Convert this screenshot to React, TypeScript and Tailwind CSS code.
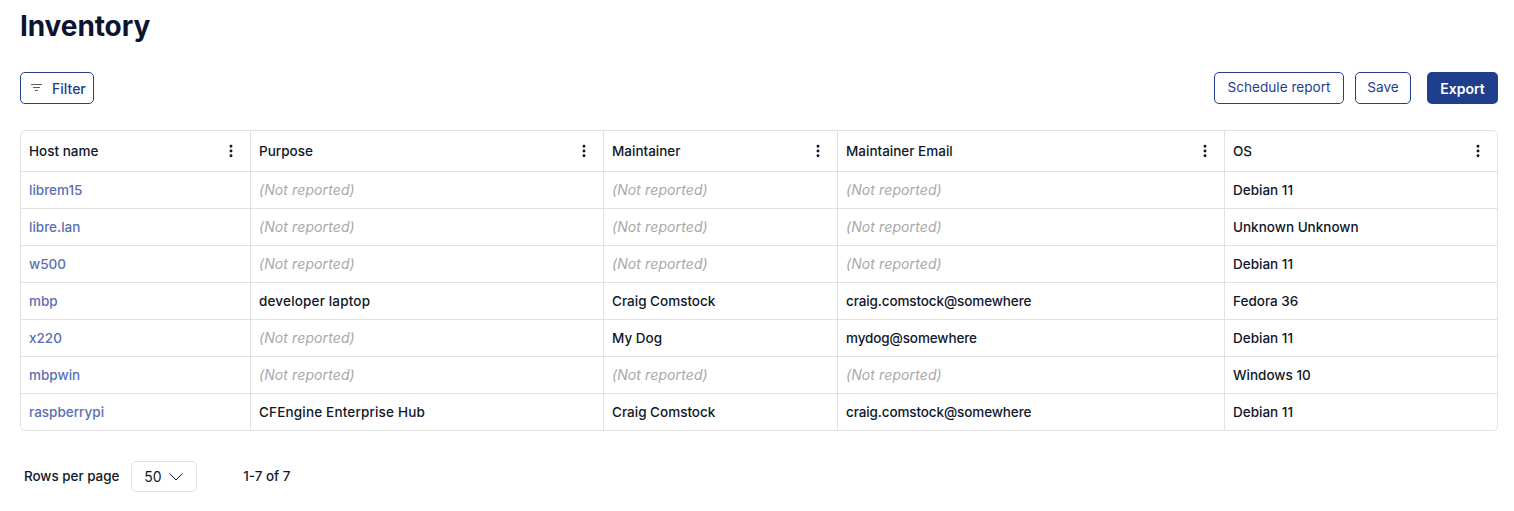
import { ChevronDown, EllipsisVertical } from "lucide-react";

const columns = [
  { label: "Host name", width: "w-[229px]" },
  { label: "Purpose", width: "w-[353px]" },
  { label: "Maintainer", width: "w-[234px]" },
  { label: "Maintainer Email", width: "w-[387px]" },
  { label: "OS", width: "w-[273px]" },
];

const rows = [
  ["librem15", "", "", "", "Debian 11"],
  ["libre.lan", "", "", "", "Unknown Unknown"],
  ["w500", "", "", "", "Debian 11"],
  ["mbp", "developer laptop", "Craig Comstock", "craig.comstock@somewhere", "Fedora 36"],
  ["x220", "", "My Dog", "mydog@somewhere", "Debian 11"],
  ["mbpwin", "", "", "", "Windows 10"],
  ["raspberrypi", "CFEngine Enterprise Hub", "Craig Comstock", "craig.comstock@somewhere", "Debian 11"],
];

function FilterIcon() {
  return (
    <svg width="11" height="8" viewBox="0 0 11 8" fill="none" stroke="#55606e" strokeWidth="1">
      <path d="M0 0.5h11M2 3.5h7M4 6.5h3" />
    </svg>
  );
}

export default function App() {
  return (
    <div className="h-[511px] bg-white pt-[7px] pr-4 pl-5 font-['Inter','Noto_Sans',sans-serif] text-[#10172a]">
      <h1 className="text-[28px] leading-[38px] font-bold tracking-[-0.1px] text-[#0b1430]">Inventory</h1>

      <div className="mt-[27px] flex items-center justify-between">
        <button className="flex h-8 w-[74px] items-center gap-[10px] rounded-[5px] border border-[#1f3f8c] pl-[10px] text-[14px] font-medium text-[#1f3f8c]">
          <FilterIcon />
          Filter
        </button>
        <div className="flex items-center">
          <button className="h-8 w-[130px] rounded-[5px] border border-[#1f3f8c] pb-0.5 text-[13.6px] text-[#1f3f8c]">
            Schedule report
          </button>
          <button className="ml-[11px] h-8 w-[56px] rounded-[5px] border border-[#1f3f8c] pb-0.5 text-[13.6px] text-[#1f3f8c]">
            Save
          </button>
          <button className="ml-4 h-8 w-[71px] rounded-[5px] bg-[#1f3f8c] text-[14px] font-semibold text-white">
            Export
          </button>
        </div>
      </div>

      <div className="mt-[26px] w-[1478px] overflow-hidden rounded-[5px] border border-[#e2e2e2]">
        <table className="w-full table-fixed border-collapse text-[13.5px] leading-5">
          <thead>
            <tr className="h-[40px]">
              {columns.map((col, i) => (
                <th
                  key={col.label}
                  className={`${col.width} py-0 pr-2 text-left font-medium ${i === 0 ? "pl-2" : "pl-[8.5px]"} ${i < 4 ? "border-r border-[#e2e2e2]" : ""}`}
                >
                  <div className="flex items-center justify-between">
                    {col.label}
                    <EllipsisVertical size={16} strokeWidth={2.4} className="mr-[3px] text-[#10172a]" />
                  </div>
                </th>
              ))}
            </tr>
          </thead>
          <tbody>
            {rows.map((row) => (
              <tr key={row[0]} className="h-[37px] border-t border-[#e2e2e2]">
                {row.map((cell, i) => (
                  <td
                    key={i}
                    className={`pr-2 ${i === 0 ? "pl-2" : "pl-[8.5px]"} ${i < 4 ? "border-r border-[#e2e2e2]" : ""} ${
                      i === 0
                        ? "font-medium text-[#5a6fb4]"
                        : cell
                          ? i === 3
                            ? "font-medium tracking-[-0.12px]"
                            : i === 1
                              ? "font-medium tracking-[0.17px]"
                              : "font-medium"
                          : "text-[14px] tracking-[0.1px] text-[#a8a8a8] italic"
                    }`}
                  >
                    {cell || "(Not reported)"}
                  </td>
                ))}
              </tr>
            ))}
          </tbody>
        </table>
      </div>

      <div className="mt-[30px] flex items-center text-[13.4px]">
        <span className="ml-1 font-medium">Rows per page</span>
        <div className="ml-3 flex h-[31px] w-[66px] items-center gap-[2px] rounded-[5px] border border-[#e2e2e2] pl-3 text-[14px]">
          50
          <ChevronDown size={24} strokeWidth={1} />
        </div>
        <span className="ml-[46px] font-medium">1-7 of 7</span>
      </div>
    </div>
  );
}
